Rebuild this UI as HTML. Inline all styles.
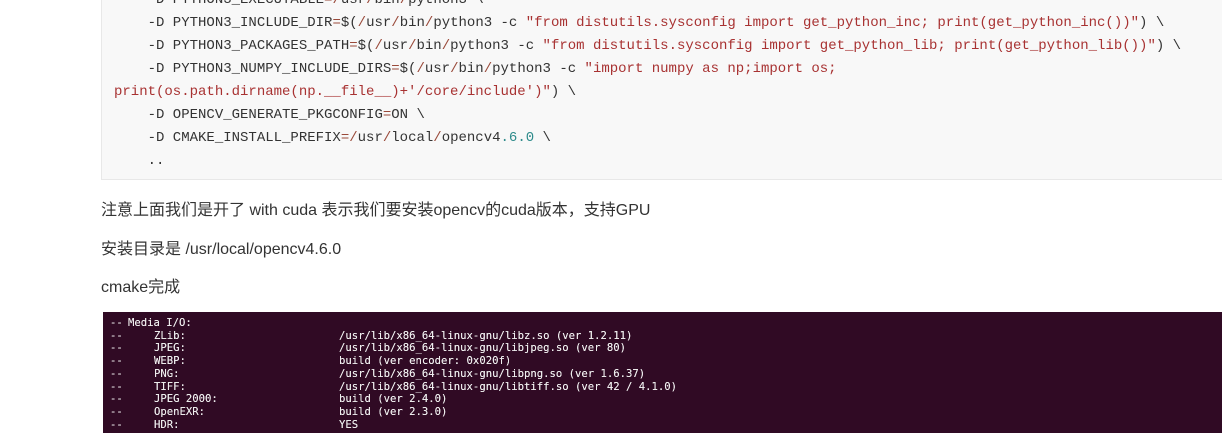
<html><head><style>
body{margin:0;width:1222px;height:433px;overflow:hidden;background:#fff;position:relative;font-family:"Liberation Sans","Noto Sans CJK SC",sans-serif}
.code{position:absolute;left:101px;top:-20px;width:1130px;height:200px;background:#f8f8f8;border:1px solid #e8e8e8;box-sizing:border-box}
.l{position:absolute;left:114px;font:14px/23px "Liberation Mono",monospace;color:#333;white-space:pre}
.s{color:#a83232}.o{color:#9a4a3a}.n{color:#2e8b8b}
p{position:absolute;left:101px;margin:0;font-size:16px;color:#333;white-space:nowrap}
.t{position:absolute;left:103px;top:312px;width:1119px;height:121px;background:#300a24}
.t div{position:absolute;font:10.6px/12.7px "DejaVu Sans Mono",monospace;color:#eee;white-space:pre;text-shadow:0 0 .3px #fff}
</style></head><body>
<div class="code"></div>
<div class="l" style="top:-11px">    -D PYTHON3_EXECUTABLE<span class="o">=/</span>usr<span class="o">/</span>bin<span class="o">/</span>python3 \</div>
<div class="l" style="top:12px">    -D PYTHON3_INCLUDE_DIR<span class="o">=</span>$(<span class="o">/</span>usr<span class="o">/</span>bin<span class="o">/</span>python3 -c <span class="s">"from distutils.sysconfig import get_python_inc; print(get_python_inc())"</span>) \</div>
<div class="l" style="top:35px">    -D PYTHON3_PACKAGES_PATH<span class="o">=</span>$(<span class="o">/</span>usr<span class="o">/</span>bin<span class="o">/</span>python3 -c <span class="s">"from distutils.sysconfig import get_python_lib; print(get_python_lib())"</span>) \</div>
<div class="l" style="top:58px">    -D PYTHON3_NUMPY_INCLUDE_DIRS<span class="o">=</span>$(<span class="o">/</span>usr<span class="o">/</span>bin<span class="o">/</span>python3 -c <span class="s">"import numpy as np;import os;</span></div>
<div class="l" style="top:81px"><span class="s">print(os.path.dirname(np.__file__)+'/core/include')"</span>) \</div>
<div class="l" style="top:104px">    -D OPENCV_GENERATE_PKGCONFIG<span class="o">=</span>ON \</div>
<div class="l" style="top:127px">    -D CMAKE_INSTALL_PREFIX<span class="o">=/</span>usr<span class="o">/</span>local<span class="o">/</span>opencv4<span class="n">.6.0</span> \</div>
<div class="l" style="top:150px">    ..</div>
<p style="top:196px">注意上面我们是开了 with cuda 表示我们要安装opencv的cuda版本，支持GPU</p>
<p style="top:235px">安装目录是 /usr/local/opencv4.6.0</p>
<p style="top:273px">cmake完成</p>
<div class="t">
<div style="left:7px;top:5px">--<br>--<br>--<br>--<br>--<br>--<br>--<br>--<br>--</div>
<div style="left:25px;top:5px">Media I/O:</div>
<div style="left:51px;top:17.7px">ZLib:<br>JPEG:<br>WEBP:<br>PNG:<br>TIFF:<br>JPEG 2000:<br>OpenEXR:<br>HDR:</div>
<div style="left:236px;top:17.7px">/usr/lib/x86_64-linux-gnu/libz.so (ver 1.2.11)<br>/usr/lib/x86_64-linux-gnu/libjpeg.so (ver 80)<br>build (ver encoder: 0x020f)<br>/usr/lib/x86_64-linux-gnu/libpng.so (ver 1.6.37)<br>/usr/lib/x86_64-linux-gnu/libtiff.so (ver 42 / 4.1.0)<br>build (ver 2.4.0)<br>build (ver 2.3.0)<br>YES</div>
</div>
</body></html>
